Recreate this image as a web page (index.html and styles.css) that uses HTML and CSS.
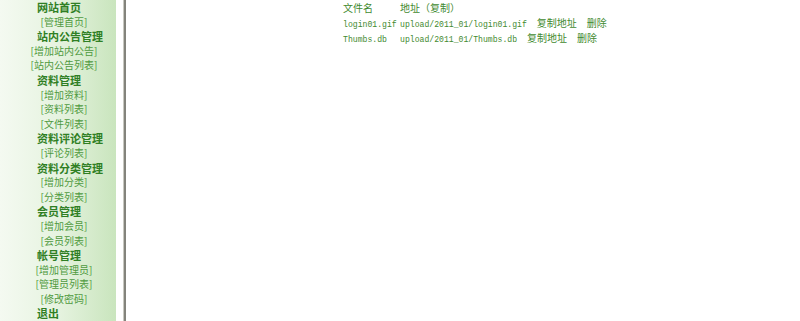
FILE: index.html
```html
<!DOCTYPE html>
<html>
<head>
    <title>上传文件管理</title>
    <link rel="stylesheet" href="styles.css">
</head>
<body>
    <div class="page">
        <!-- left menu -->
        <div class="menu">
            <div class="head">网站首页</div>
            <a class="item" href="#">[管理首页]</a>
            <div class="head">站内公告管理</div>
            <a class="item" href="#">[增加站内公告]</a>
            <a class="item" href="#">[站内公告列表]</a>
            <div class="head">资料管理</div>
            <a class="item" href="#">[增加资料]</a>
            <a class="item" href="#">[资料列表]</a>
            <a class="item" href="#">[文件列表]</a>
            <div class="head">资料评论管理</div>
            <a class="item" href="#">[评论列表]</a>
            <div class="head">资料分类管理</div>
            <a class="item" href="#">[增加分类]</a>
            <a class="item" href="#">[分类列表]</a>
            <div class="head">会员管理</div>
            <a class="item" href="#">[增加会员]</a>
            <a class="item" href="#">[会员列表]</a>
            <div class="head">帐号管理</div>
            <a class="item" href="#">[增加管理员]</a>
            <a class="item" href="#">[管理员列表]</a>
            <a class="item" href="#">[修改密码]</a>
            <div class="head">退出</div>
        </div>
        <div class="divider"></div>

        <!-- file list -->
        <div class="main">
            <table class="files">
                <tr>
                    <td class="name">文件名</td>
                    <td>地址（复制）</td>
                </tr>
                <tr>
                    <td class="name"><span class="mono">login01.gif</span></td>
                    <td><span class="mono">upload/2011_01/login01.gif</span><a href="#">复制地址</a><a href="#">删除</a></td>
                </tr>
                <tr>
                    <td class="name"><span class="mono">Thumbs.db</span></td>
                    <td><span class="mono">upload/2011_01/Thumbs.db</span><a href="#">复制地址</a><a href="#">删除</a></td>
                </tr>
            </table>
        </div>
    </div>
</body>
</html>
```

FILE: styles.css
```css
body {
    margin: 0;
    background: #ffffff;
    font-family: "Noto Sans CJK SC", "Liberation Sans", sans-serif;
}

.page {
    display: flex;
    height: 321px;
    overflow: hidden;
}

.menu {
    width: 116px;
    flex-shrink: 0;
    display: flex;
    flex-direction: column;
    background: linear-gradient(to right, #f4faf1, #e6f3e0 50%, #c9e5bd);
}

.head {
    height: 14.6px;
    line-height: 14.6px;
    padding-left: 37px;
    font-size: 11px;
    font-weight: bold;
    color: #2f7f24;
    white-space: nowrap;
}

.item {
    height: 14.6px;
    line-height: 14.6px;
    padding-left: 12px;
    text-align: center;
    font-size: 10px;
    color: #4f9a40;
    text-decoration: none;
    white-space: nowrap;
}

.divider {
    width: 0;
    margin-left: 7px;
    border-left: 1px solid #c8c8c0;
    border-right: 2px solid #84847c;
    flex-shrink: 0;
}

.main {
    flex: 1;
    padding-left: 217px;
}

.files {
    border-collapse: collapse;
    font-size: 10px;
    color: #3f8a30;
}

.files td {
    padding: 0;
    height: 15px;
    line-height: 15px;
    white-space: nowrap;
    vertical-align: middle;
}

.files td.name {
    width: 57px;
}

.files a {
    color: #3f8a30;
    text-decoration: none;
    margin-left: 10px;
}

.mono {
    font-family: "Liberation Mono", monospace;
    font-size: 8.15px;
    line-height: 8px;
}
```
